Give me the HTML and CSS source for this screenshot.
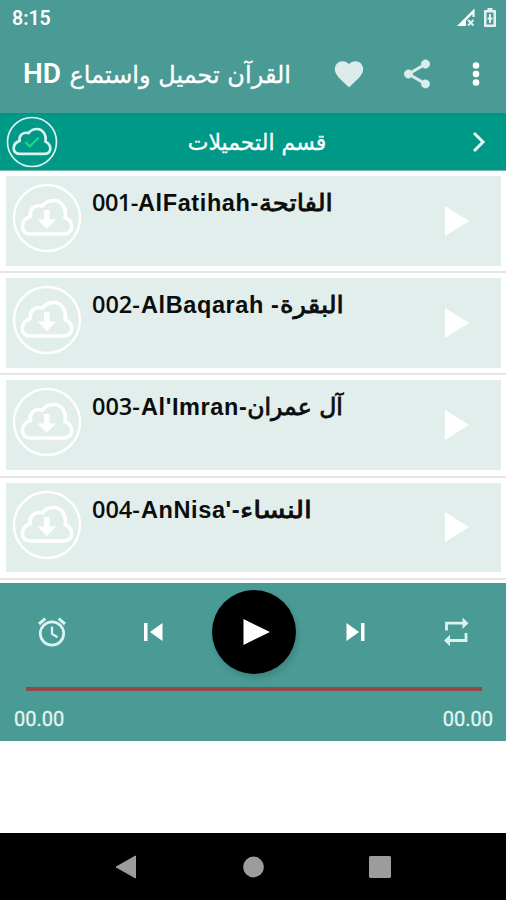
FILE: index.html
```
<!DOCTYPE html>
<html lang="ar">

<head>
    <meta charset="UTF-8">
    <meta name="viewport" content="width=device-width, initial-scale=1.0">
    <title>القرآن تحميل واستماع HD</title>
    <link rel="stylesheet" href="styles.css">
</head>

<body>
    <!-- shared icons -->
    <svg class="sprite" width="0" height="0">
        <symbol id="cloud" viewBox="0 0 70 70">
            <circle cx="35" cy="35" r="33" fill="none" stroke="currentColor" stroke-width="2.3" />
            <path d="M18 51H52C62 50.500 62 38.500 53 34.500C55 25 49 17.500 42 17.500C36.500 17.500 32.500 20 30.500 23C23 21 17 26 18.500 33.500C8 36.500 7.500 50.500 18 51Z" fill="none" stroke="currentColor" stroke-width="3.600" stroke-linejoin="round" />
        </symbol>
        <symbol id="arrow" viewBox="0 0 70 70">
            <path d="M32 27h5.500v9.500h6.500l-9.250 9.500-9.250-9.500H32z" fill="currentColor" />
        </symbol>
    </svg>

    <div class="status-bar">
        <span class="clock">8:15</span>
        <svg class="signal" width="20" height="20" viewBox="0 0 20 20">
            <path d="M1 18L18.500 0.500V9h-2V6L10 12.500V18z" fill="#fff" />
            <path d="M12 12l5.500 5.500M17.500 12L12 17.500" stroke="#e5f1f0" stroke-width="2" />
        </svg>
        <svg class="battery" width="12" height="20" viewBox="0 0 12 20">
            <path d="M3.500 2V0h5v2H11q1 0 1 1v15q0 1-1 1H1q-1 0-1-1V3q0-1 1-1z" fill="#e5f1f0" />
            <path d="M2.500 4.500h7v12h-7z" fill="#4a9b96" />
            <path d="M6 6v9M3.500 10.500h5" stroke="#e5f1f0" stroke-width="2" />
        </svg>
    </div>

    <div class="app-bar">
        <h1 dir="rtl"><span class="title-ar">القرآن تحميل واستماع</span><span class="title-hd">HD</span></h1>
        <svg class="heart" width="34" height="34" viewBox="0 0 24 24">
            <path d="M12 21.350l-1.450-1.320C5.400 15.360 2 12.280 2 8.500 2 5.420 4.420 3 7.500 3c1.740 0 3.410.81 4.500 2.090C13.090 3.810 14.760 3 16.500 3 19.580 3 22 5.420 22 8.500c0 3.780-3.400 6.860-8.550 11.540z" fill="#dcecea" />
        </svg>
        <svg class="share" width="34" height="34" viewBox="0 0 24 24">
            <path d="M18 16.080c-.76 0-1.440.3-1.960.77L8.910 12.700c.05-.23.09-.46.09-.7s-.04-.47-.09-.7l7.050-4.110c.54.5 1.250.81 2.040.81 1.660 0 3-1.340 3-3s-1.340-3-3-3-3 1.340-3 3c0 .24.04.47.09.7L8.040 9.810C7.500 9.310 6.790 9 6 9c-1.660 0-3 1.340-3 3s1.340 3 3 3c.79 0 1.500-.31 2.040-.81l7.120 4.160c-.05.21-.08.43-.08.65 0 1.610 1.310 2.920 2.920 2.920s2.920-1.310 2.920-2.920-1.310-2.920-2.920-2.920z" fill="#dcecea" stroke="#dcecea" stroke-width="0.400" />
        </svg>
        <svg class="more" width="8" height="26" viewBox="0 0 8 26">
            <g fill="#fff"><circle cx="4" cy="4.500" r="3.300" /><circle cx="4" cy="13" r="3.300" /><circle cx="4" cy="21.500" r="3.300" /></g>
        </svg>
    </div>

    <div class="downloads">
        <svg class="downloads-icon" width="52" height="52" viewBox="0 0 70 70">
            <use href="#cloud" />
            <path d="M26 35l6 6 12-12" fill="none" stroke="#14dd86" stroke-width="3" />
        </svg>
        <span class="downloads-title" dir="rtl">قسم التحميلات</span>
        <svg width="16" height="24" viewBox="0 0 16 24">
            <path d="M2 3l9 9-9 9" fill="none" stroke="#e8f6f4" stroke-width="3" />
        </svg>
    </div>

    <div class="list">
        <div class="row">
            <div class="card">
                <svg class="cloud-icon" width="70" height="70"><use href="#cloud" /><use href="#arrow" /></svg>
                <div class="name"><span class="num">001-</span><span class="latin">AlFatihah-</span><span class="arabic stretch">الفاتحة</span></div>
                <svg class="play" width="24" height="30" viewBox="0 0 24 30"><path d="M0 0l24 15L0 30z" fill="#fff" /></svg>
            </div>
        </div>
        <div class="row">
            <div class="card">
                <svg class="cloud-icon" width="70" height="70"><use href="#cloud" /><use href="#arrow" /></svg>
                <div class="name"><span class="num wide">002-</span><span class="latin">AlBaqarah -</span><span class="arabic stretch">البقرة</span></div>
                <svg class="play" width="24" height="30" viewBox="0 0 24 30"><path d="M0 0l24 15L0 30z" fill="#fff" /></svg>
            </div>
        </div>
        <div class="row">
            <div class="card">
                <svg class="cloud-icon" width="70" height="70"><use href="#cloud" /><use href="#arrow" /></svg>
                <div class="name"><span class="num wide">003-</span><span class="latin">Al'Imran-</span><span class="arabic">آل عمران</span></div>
                <svg class="play" width="24" height="30" viewBox="0 0 24 30"><path d="M0 0l24 15L0 30z" fill="#fff" /></svg>
            </div>
        </div>
        <div class="row">
            <div class="card">
                <svg class="cloud-icon" width="70" height="70"><use href="#cloud" /><use href="#arrow" /></svg>
                <div class="name"><span class="num wide">004-</span><span class="latin">AnNisa'-</span><span class="arabic stretch-more">النساء</span></div>
                <svg class="play" width="24" height="30" viewBox="0 0 24 30"><path d="M0 0l24 15L0 30z" fill="#fff" /></svg>
            </div>
        </div>
    </div>

    <div class="player">
        <div class="controls">
            <svg width="32" height="32" viewBox="0 0 32 32" fill="none" stroke="#dcf2f0">
                <circle cx="16" cy="17.500" r="11.700" stroke-width="2.700" />
                <path d="M16 10.500v7.500l5.500 3.300" stroke-width="2.200" />
                <path d="M3 8l6.300-5.300M29 8l-6.300-5.300" stroke-width="3" />
            </svg>
            <svg width="20" height="20" viewBox="0 0 20 20" fill="#fff">
                <path d="M1 1h3.500v18H1zM19.500 1v18L7 10z" />
            </svg>
            <div class="play-btn">
                <svg width="28" height="28" viewBox="0 0 28 28"><path d="M1.500 1l26.500 13L1.500 27z" fill="#fff" /></svg>
            </div>
            <svg width="20" height="20" viewBox="0 0 20 20" fill="#fff">
                <path d="M1.500 1v18L14 10zM16 1h3.500v18H16z" />
            </svg>
            <svg width="32" height="32" viewBox="0 0 32 32">
                <path d="M6.500 14.500V7.200H24M26 17v7.500H8" fill="none" stroke="#dcf2f0" stroke-width="2.800" />
                <path d="M22.500 1.500l6 5.700-6 5.700zM10 18.800l-6 5.700 6 5.700z" fill="#dcf2f0" />
            </svg>
        </div>
        <div class="progress"></div>
        <div class="times">
            <span>00.00</span>
            <span>00.00</span>
        </div>
    </div>

    <div class="nav-bar">
        <svg width="22" height="24" viewBox="0 0 22 24"><path d="M1 12L20.500 1v22z" fill="#9c9c9c" stroke="#9c9c9c" stroke-linejoin="round" /></svg>
        <svg width="22" height="22" viewBox="0 0 22 22"><circle cx="11.500" cy="11" r="10.400" fill="#9c9c9c" /></svg>
        <svg width="22" height="22" viewBox="0 0 22 22"><rect width="22" height="22" rx="1.500" fill="#9c9c9c" /></svg>
    </div>
</body>

</html>
```
FILE: styles.css
```
* {
    margin: 0;
    padding: 0;
    box-sizing: border-box;
}

body {
    width: 506px;
    height: 900px;
    display: flex;
    flex-direction: column;
    overflow: hidden;
    font-family: Roboto, "DejaVu Sans", sans-serif;
    background: #fff;
    color: #fff;
}

svg {
    display: block;
    flex-shrink: 0;
}

.sprite {
    display: none;
}

.status-bar {
    height: 36px;
    padding: 0 10px 0 12px;
    display: flex;
    align-items: center;
    background: #4a9b96;
}

.clock {
    flex: 1;
    font-size: 19.5px;
    font-weight: 600;
}

.signal {
    margin-right: 8px;
}

.app-bar {
    height: 77px;
    padding: 0 26px 2px 23px;
    display: flex;
    align-items: center;
    background: #4a9b96;
}

.app-bar h1 {
    width: 268px;
    display: flex;
    justify-content: space-between;
    align-items: baseline;
    white-space: nowrap;
    font-weight: 600;
}

.title-ar {
    font-family: "DejaVu Sans", sans-serif;
    font-size: 24px;
    font-weight: 400;
    -webkit-text-stroke: 0.3px #fff;
}

.title-hd {
    font-size: 28px;
}

.heart {
    margin-left: 41px;
}

.share {
    margin-left: 34px;
}

.more {
    margin-left: auto;
}

.downloads {
    height: 58px;
    padding: 0 18px 0 6px;
    display: flex;
    align-items: center;
    justify-content: space-between;
    background: #009886;
    border-top: 1px solid #168b80;
    border-bottom: 1px solid #74b9b0;
}

.downloads-icon {
    color: #d9f3ef;
}

.downloads-title {
    margin-left: -16px;
    font-family: "DejaVu Sans", sans-serif;
    font-size: 22px;
    -webkit-text-stroke: 0.3px #fff;
}

.row {
    height: 102.2px;
    padding: 5px 5px 6px 6px;
    border-bottom: 2px solid #e5e5e5;
}

.card {
    height: 89.5px;
    padding: 7px 32px 0 6px;
    display: flex;
    background: #e2eeeb;
}

.cloud-icon {
    color: #fff;
}

.name {
    margin: 3px 0 0 10px;
    height: 32px;
    flex: 1;
    display: flex;
    align-items: baseline;
    line-height: 32px;
    white-space: nowrap;
    color: #0b0d0d;
}

.num {
    width: 46px;
    font-family: "Open Sans", sans-serif;
    font-size: 23.5px;
    font-weight: 600;
    letter-spacing: -0.5px;
}

.num.wide {
    width: 49px;
    letter-spacing: 0;
}

.latin {
    font-family: "Liberation Sans", sans-serif;
    font-size: 23.5px;
    font-weight: 700;
    letter-spacing: 0.6px;
}

.arabic {
    font-family: "DejaVu Sans", sans-serif;
    font-size: 23.5px;
    -webkit-text-stroke: 0.8px #0b0d0d;
    transform-origin: left;
}

.arabic.stretch {
    transform: scaleX(1.1);
}

.arabic.stretch-more {
    transform: scaleX(1.2);
}

.play {
    margin-top: 22.5px;
}

.player {
    height: 158px;
    margin-top: 3px;
    background: #4a9b96;
}

.controls {
    height: 99px;
    padding-left: 1px;
    display: grid;
    grid-template-columns: repeat(5, 1fr);
    align-items: center;
    justify-items: center;
}

.play-btn {
    width: 84px;
    height: 84px;
    padding-left: 5px;
    display: flex;
    align-items: center;
    justify-content: center;
    border-radius: 50%;
    background: #000;
    box-shadow: 2px 4px 6px rgba(0, 0, 0, 0.15);
}

.progress {
    height: 4px;
    margin: 5px 24px 0 26px;
    background: #8f4b48;
}

.times {
    padding: 14px 13px 0 14px;
    display: flex;
    justify-content: space-between;
    font-size: 20px;
    line-height: 29px;
    color: #e4f5f3;
    -webkit-text-stroke: 0.3px #e4f5f3;
}

.nav-bar {
    height: 67px;
    margin-top: auto;
    padding: 0 115px 0 115px;
    display: flex;
    align-items: center;
    justify-content: space-between;
    background: #000;
}
```
